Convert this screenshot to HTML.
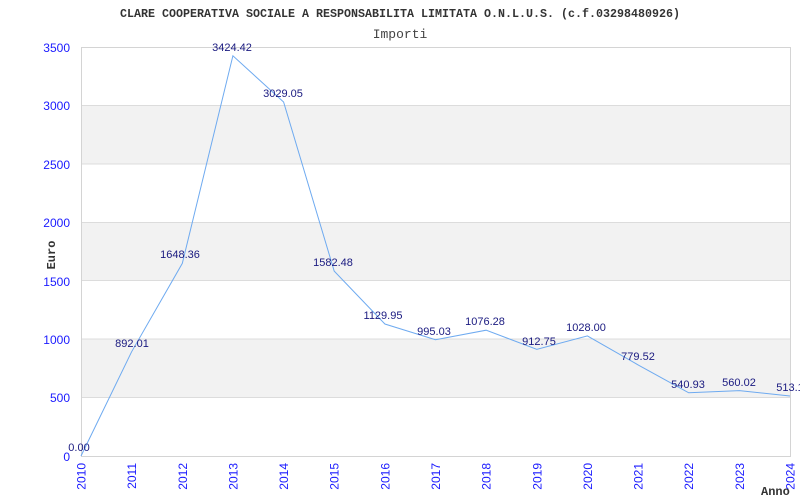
<!DOCTYPE html>
<html><head><meta charset="utf-8"><style>html,body{margin:0;padding:0;background:#fff}svg{display:block}</style></head>
<body>
<svg width="800" height="500" xmlns="http://www.w3.org/2000/svg">
<rect width="800" height="500" fill="#fff"/>
<rect x="81" y="105.6" width="709" height="58.4" fill="#f2f2f2"/>
<rect x="81" y="222.3" width="709" height="58.4" fill="#f2f2f2"/>
<rect x="81" y="339.1" width="709" height="58.5" fill="#f2f2f2"/>
<g stroke="#dcdcdc" stroke-width="1">
<line x1="81" y1="105.5" x2="790" y2="105.5"/><line x1="81" y1="164" x2="790" y2="164"/>
<line x1="81" y1="222.5" x2="790" y2="222.5"/><line x1="81" y1="280.5" x2="790" y2="280.5"/>
<line x1="81" y1="339" x2="790" y2="339"/><line x1="81" y1="397.5" x2="790" y2="397.5"/>
</g>
<rect x="81.5" y="47.5" width="709" height="409" fill="none" stroke="#d4d4d4"/>
<polyline fill="none" stroke="#6eaaf0" stroke-width="1" points="81,456 131.6,351.8 182.3,263.4 232.9,55.8 283.6,102 334.2,271.1 384.9,324 435.5,339.7 486.1,330.2 536.8,349.3 587.4,335.9 638.1,364.9 688.7,392.8 739.4,390.6 790,396"/>
<g font-family="Liberation Mono, monospace" fill="#333">
<text x="120" y="17" font-size="11.5" font-weight="bold" textLength="560" lengthAdjust="spacingAndGlyphs">CLARE COOPERATIVA SOCIALE A RESPONSABILITA LIMITATA O.N.L.U.S. (c.f.03298480926)</text>
<text x="400" y="38" text-anchor="middle" font-size="13" fill="#444">Importi</text>
<text transform="translate(55,255) rotate(-90)" text-anchor="middle" font-size="12" font-weight="bold">Euro</text>
<text x="761" y="495" font-size="12" font-weight="bold">Anno</text>
</g>
<g font-family="Liberation Sans, sans-serif" font-size="12" fill="#1a1aff" text-anchor="end">
<text x="70" y="52">3500</text><text x="70" y="110">3000</text><text x="70" y="169">2500</text>
<text x="70" y="227">2000</text><text x="70" y="286">1500</text><text x="70" y="344">1000</text>
<text x="70" y="402">500</text><text x="70" y="461">0</text>
<text transform="translate(85.5,463) rotate(-90)">2010</text>
<text transform="translate(136,463) rotate(-90)">2011</text>
<text transform="translate(186.8,463) rotate(-90)">2012</text>
<text transform="translate(237.4,463) rotate(-90)">2013</text>
<text transform="translate(288,463) rotate(-90)">2014</text>
<text transform="translate(338.7,463) rotate(-90)">2015</text>
<text transform="translate(389.4,463) rotate(-90)">2016</text>
<text transform="translate(440,463) rotate(-90)">2017</text>
<text transform="translate(490.6,463) rotate(-90)">2018</text>
<text transform="translate(541.3,463) rotate(-90)">2019</text>
<text transform="translate(591.9,463) rotate(-90)">2020</text>
<text transform="translate(642.6,463) rotate(-90)">2021</text>
<text transform="translate(693.2,463) rotate(-90)">2022</text>
<text transform="translate(743.9,463) rotate(-90)">2023</text>
<text transform="translate(794.5,463) rotate(-90)">2024</text>
</g>
<g font-family="Liberation Sans, sans-serif" font-size="11" fill="#1a1a80" text-anchor="middle">
<text x="79" y="451">0.00</text>
<text x="132" y="347">892.01</text>
<text x="180" y="258">1648.36</text>
<text x="232" y="51">3424.42</text>
<text x="283" y="97">3029.05</text>
<text x="333" y="266">1582.48</text>
<text x="383" y="319">1129.95</text>
<text x="434" y="335">995.03</text>
<text x="485" y="325">1076.28</text>
<text x="539" y="345">912.75</text>
<text x="586" y="331">1028.00</text>
<text x="638" y="360">779.52</text>
<text x="688" y="388">540.93</text>
<text x="739" y="386">560.02</text>
<text x="790" y="391">513.1</text>
</g>
</svg>
</body></html>
